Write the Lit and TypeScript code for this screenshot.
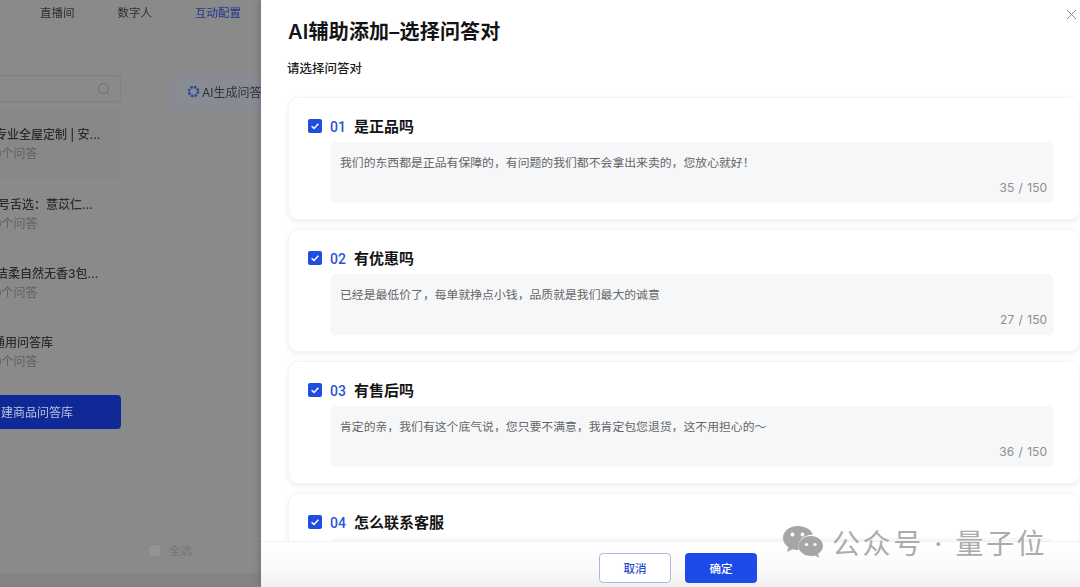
import { LitElement, html, css, svg } from "lit";
import { customElement } from "lit/decorators.js";

const cards = [
  { n: "01", q: "是正品吗", a: "我们的东西都是正品有保障的\uFF0C有问题的我们都不会拿出来卖的\uFF0C您放心就好\uFF01", c: "35 / 150" },
  { n: "02", q: "有优惠吗", a: "已经是最低价了\uFF0C每单就挣点小钱\uFF0C品质就是我们最大的诚意", c: "27 / 150" },
  { n: "03", q: "有售后吗", a: "肯定的亲\uFF0C我们有这个底气说\uFF0C您只要不满意\uFF0C我肯定包您退货\uFF0C这不用担心的\uFF5E", c: "36 / 150" },
  { n: "04", q: "怎么联系客服", a: "", c: "" },
];

const items = [
  { t: "专业全屋定制 | 安...", s: "0个问答", on: true, o: -5 },
  { t: "号舌选\uFF1A薏苡仁...", s: "0个问答", on: false, o: -2 },
  { t: "洁柔自然无香3包...", s: "0个问答", on: false, o: -4 },
  { t: "通用问答库", s: "0个问答", on: false, o: -7 },
];

const check = svg`<svg viewBox="0 0 14 14" width="14" height="14"><rect width="14" height="14" rx="2" fill="#1f4de0"/><path d="M3.6 7.2l2.4 2.2 4.4-4.6" fill="none" stroke="#fff" stroke-width="1.5"/></svg>`;

@customElement("app-root")
export class AppRoot extends LitElement {
  static styles = css`
    :host { display: block; width: 1080px; height: 587px; overflow: hidden; font-family: Inter, "Noto Sans CJK SC", sans-serif; }
    .page { display: flex; width: 1080px; height: 587px; position: relative; overflow: hidden; }
    .left { width: 261px; flex: none; background: #8a8a8a; overflow: hidden; display: flex; flex-direction: column; filter: blur(0.35px); }
    .tabs { display: flex; height: 23px; flex: none; padding-left: 40px; gap: 43px; font-size: 11.5px; color: #2e2e2e; align-items: center; }
    .tabs .active { color: #1e3590; }
    .main { display: flex; flex: 1; min-height: 0; }
    .side { width: 121px; flex: none; display: flex; flex-direction: column; padding-top: 52px; }
    .search { width: 121px; height: 27px; box-sizing: border-box; border: 1px solid #818181; border-left: 0; border-radius: 0 3px 3px 0; display: flex; align-items: center; justify-content: flex-end; padding-right: 9px; flex: none; }
    .list { width: 121px; display: flex; flex-direction: column; margin-top: 6px; }
    .item { height: 69px; box-sizing: border-box; padding-top: 19px; overflow: hidden; white-space: nowrap; }
    .item.on { background: #878888; height: 72px; padding-top: 18px; margin-bottom: -3px; }
    .t { font-size: 12px; font-weight: 500; color: #2c2c2c; line-height: 18px; }
    .s { font-size: 12px; color: #606060; line-height: 18px; margin-top: 1px; margin-left: -6px; }
    .new { width: 121px; height: 34px; margin-top: 11px; background: #0f2a96; border-radius: 0 4px 4px 0; color: #b9c2dc; font-size: 12px; display: flex; align-items: center; padding: 0 0 2px 1px; box-sizing: border-box; flex: none; }
    .center { flex: 1; display: flex; flex-direction: column; min-width: 0; padding-left: 49px; padding-top: 50px; }
    .ai { width: 120px; height: 37px; background: #898b93; border-radius: 8px 0 0 8px; display: flex; align-items: center; padding-left: 17px; gap: 2px; font-size: 12px; color: #2f3340; white-space: nowrap; flex: none; }
    .all { display: flex; align-items: center; gap: 8px; margin-top: auto; margin-bottom: 15px; margin-left: -22px; font-size: 11.5px; color: #747474; }
    .all i { width: 13px; height: 13px; background: #939393; border: 1px solid #868686; border-radius: 2px; box-sizing: border-box; }
    .foot { height: 14px; background: #838383; flex: none; }

    .drawer { flex: 1; min-width: 0; background: #fff; display: flex; flex-direction: column; box-shadow: -3px 0 5px rgba(0,0,0,.12); position: relative; }
    .head { flex: none; padding: 19px 0 0 27px; height: 78px; box-sizing: border-box; position: relative; }
    h1 { margin: 0; font-size: 20px; line-height: 26px; font-weight: 600; color: #141414; letter-spacing: .2px; }
    .sub { margin-top: 14px; font-size: 12.5px; line-height: 20px; font-weight: 500; color: #1c1c1c; margin-left: -1px; }
    .close { position: absolute; right: 2px; top: 8px; }
    .body { flex: 1; min-height: 0; overflow: hidden; padding-left: 27px; display: flex; flex-direction: column; gap: 9px; padding-top: 19px; }
    .card { flex: none; height: 123px; box-sizing: border-box; background: #fff; border: 1px solid #f3f4f6; border-right: 0; border-radius: 10px; box-shadow: 0 2px 6px rgba(0,0,0,.07); padding: 18px 0 0 19px; margin-right: 1px; }
    .row { display: flex; align-items: center; height: 20px; }
    .num { width: 24px; margin: 1px 0 0 8px; font-family: Roboto, sans-serif; font-size: 14px; font-weight: 500; color: #2b54d8; }
    .q { font-size: 15px; font-weight: 700; color: #141414; margin-top: -1px; }
    .box { margin: 6px 25px 0 22px; height: 61px; background: #f6f7f9; border-radius: 6px; padding: 13px 7px 0 10px; box-sizing: border-box; display: flex; flex-direction: column; }
    .a { font-size: 11.85px; line-height: 16px; color: #666; white-space: nowrap; }
    .c { margin-top: auto; margin-bottom: 7px; text-align: right; font-size: 12px; line-height: 16px; color: #8e8e8e; word-spacing: 1px; }
    .bar { flex: none; height: 46px; border-top: 1px solid #f1f1f1; background: linear-gradient(#fff, #fafafa 60%, #f0f0f0); display: flex; padding: 11px 0 0 338px; gap: 14px; box-sizing: border-box; }
    button { width: 72px; height: 30px; border-radius: 4px; font: 500 11.5px Inter, "Noto Sans CJK SC", sans-serif; padding: 0; box-sizing: border-box; }
    .cancel { background: #fff; color: #2a50d0; border: 1px solid #a9b8e8; }
    .ok { background: #1c4bea; color: #fff; border: 0; }
    .mark { position: absolute; left: 782px; top: 526px; display: flex; align-items: center; gap: 8px; color: #ababab; font-size: 28px; line-height: 36px; letter-spacing: 2.6px; white-space: nowrap; }
    .mark svg { margin-top: -4px; }
  `;

  render() {
    return html`<div class="page">
      <div class="left">
        <div class="tabs"><span>直播间</span><span>数字人</span><span class="active">互动配置</span></div>
        <div class="main">
          <div class="side">
            <div class="search"><svg width="14" height="14" viewBox="0 0 14 14" fill="none" stroke="#6e6e6e" stroke-width="1"><circle cx="6.500" cy="6.500" r="5"/><path d="M10.200 10.200l2.300 2.300"/></svg></div>
            <div class="list">
              ${items.map((it) => html`<div class="item ${it.on ? "on" : ""}">
                <div class="t" style="margin-left:${it.o}px">${it.t}</div><div class="s">${it.s}</div></div>`)}
            </div>
            <div class="new">建商品问答库</div>
          </div>
          <div class="center">
            <div class="ai">
              <svg width="13" height="13" viewBox="0 0 13 13" fill="none"><circle cx="6.500" cy="6.500" r="4.500" stroke="#2b4a9c" stroke-width="2.600" stroke-dasharray="2.400 1.100"/></svg>
              <span>AI生成问答</span>
            </div>
            <div class="all"><i></i><span>全选</span></div>
          </div>
        </div>
        <div class="foot"></div>
      </div>
      <div class="drawer">
        <div class="head">
          <h1>AI辅助添加–选择问答对</h1>
          <div class="sub">请选择问答对</div>
          <svg class="close" width="13" height="13" viewBox="0 0 13 13" fill="none" stroke="#8c8c8c" stroke-width="1"><path d="M2 2l9 9M11 2l-9 9"/></svg>
        </div>
        <div class="body">
          ${cards.map((c) => html`<div class="card">
            <div class="row">${check}<span class="num">${c.n}</span><span class="q">${c.q}</span></div>
            <div class="box"><div class="a">${c.a}</div><div class="c">${c.c}</div></div>
          </div>`)}
        </div>
        <div class="bar"><button class="cancel">取消</button><button class="ok">确定</button></div>
      </div>
      <div class="mark">
        <svg width="42" height="34" viewBox="0 0 42 34"><path fill="#a6a6a6" d="M15.500 1C7.500 1 1 6.300 1 13c0 3.800 2.100 7 5.400 9.200L5 27l5.400-2.800c1.600.5 3.300.8 5.100.8.500 0 1 0 1.500-.1-.4-1.200-.6-2.400-.6-3.700 0-6.300 6-11.400 13.400-11.400h1.200C29.600 4.600 23.100 1 15.500 1z"/><path fill="#a6a6a6" d="M41 21c0-5.500-5.400-10-12.200-10S16.500 15.500 16.500 21s5.500 10 12.300 10c1.400 0 2.800-.2 4.100-.6l4.300 2.400-1.200-3.900C38.900 27 41 24.200 41 21z"/><circle cx="10.500" cy="9.500" r="1.900" fill="#fff"/><circle cx="20.500" cy="9.500" r="1.900" fill="#fff"/><circle cx="24.500" cy="19.500" r="1.600" fill="#fff"/><circle cx="33" cy="19.500" r="1.600" fill="#fff"/></svg>
        <span>公众号 · 量子位</span>
      </div>
    </div>`;
  }
}
